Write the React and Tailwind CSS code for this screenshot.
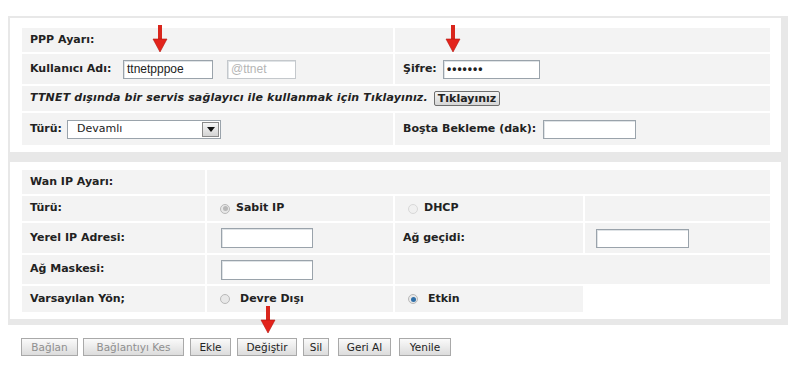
import React from "react";

const FONT = "font-['Liberation_Sans',Arial,sans-serif]";
const LABEL = "font-['DejaVu_Sans',Verdana,sans-serif]";

function Arrow({ className }) {
  return (
    <svg className={`absolute pointer-events-none ${className}`} width="16" height="28" viewBox="0 0 16 28">
      <rect x="6" y="0" width="4" height="15" fill="#d9261c" />
      <path d="M1 14 L15 14 L8 27 Z" fill="#e3231b" stroke="#b3140e" strokeWidth="0.6" />
    </svg>
  );
}

function TextBox({ className = "", children, muted }) {
  return (
    <div
      className={`h-[19px] bg-white border ${muted ? "border-[#c4c8cc]" : "border-[#9aa3ab]"} shadow-[inset_1px_1px_0_#dfe3e6] flex items-center px-[3px] text-[12px] ${FONT} ${
        muted ? "text-[#b5b5b5]" : "text-[#222]"
      } ${className}`}
    >
      {children}
    </div>
  );
}

function Radio({ checked, faint }) {
  return (
    <span
      className={`inline-flex w-[10px] h-[10px] rounded-full border items-center justify-center ${
        faint ? "border-[#d8d8d8] bg-[#f0f0f0]" : "border-[#b9b9b9] bg-[#e8e8e8]"
      }`}
    >
      {checked && (
        <span
          className={`w-[5px] h-[5px] rounded-full ${checked === "blue" ? "bg-[#2f6fa8]" : "bg-[#b8b8b8]"}`}
        />
      )}
    </span>
  );
}

function Btn({ children, w, disabled, className = "" }) {
  return (
    <button
      className={`h-[18px] ${w} border border-[#a9a9a9] bg-gradient-to-b from-[#fafafa] to-[#dcdcdc] ${LABEL} text-[10.5px] leading-none ${
        disabled ? "text-[#8f8f8f]" : "text-[#222]"
      } ${className}`}
    >
      {children}
    </button>
  );
}

const cell = "bg-[#f3f3f3] flex items-center";

export default function App() {
  return (
    <div className={`relative w-[796px] h-[366px] bg-white ${FONT} text-[#222] overflow-hidden`}>
      <div className="h-[16px]" />
      <div className="ml-[8px] w-[780px] bg-[#e8e8e8] pt-[2px] pl-[2px] pr-[7px] pb-[6px] flex flex-col gap-[10px]">
        {/* PPP panel */}
        <div className="bg-white h-[134px] pt-[10px] pl-[12px]">
          <div className={`w-[748px] flex flex-col gap-[2px] text-[11px] font-bold ${LABEL}`}>
            <div className="flex gap-[2px] h-[24px]">
              <div className={`${cell} w-[371px] pl-[8px]`}>PPP Ayarı:</div>
              <div className={`${cell} flex-1`} />
            </div>
            <div className="flex gap-[2px] h-[30px]">
              <div className={`${cell} w-[371px] pl-[8px]`}>
                <span className="w-[93px]">Kullanıcı Adı:</span>
                <TextBox className="w-[90px] h-[18px] font-normal">ttnetpppoe</TextBox>
                <TextBox muted className="w-[69px] h-[18px] ml-[14px] font-normal">@ttnet</TextBox>
              </div>
              <div className={`${cell} flex-1 pl-[8px]`}>
                <span className="w-[40px]">Şifre:</span>
                <TextBox className="w-[97px] font-bold tracking-[1px] text-[11px]">•••••••</TextBox>
              </div>
            </div>
            <div className={`${cell} h-[25px] pl-[8px] italic`}>
              <span className="tracking-[0.17px]">TTNET dışında bir servis sağlayıcı ile kullanmak için Tıklayınız.</span>
              <button className="ml-[6px] h-[15px] px-[3px] border border-[#6f6f6f] rounded-[2px] bg-gradient-to-b from-[#f4f4f4] to-[#d6d6d6] not-italic font-bold text-[11px] leading-none">
                Tıklayınız
              </button>
            </div>
            <div className="flex gap-[2px] h-[32px]">
              <div className={`${cell} w-[371px] pl-[8px]`}>
                <span className="w-[37px]">Türü:</span>
                <div className="w-[154px] h-[19px] bg-white border border-[#9aa3ab] flex items-center">
                  <span className="flex-1 pl-[9px] font-normal text-[11px]">Devamlı</span>
                  <span className="w-[17px] h-[15px] mr-[1px] border border-[#8a8a8a] bg-gradient-to-b from-[#f6f6f6] to-[#d4d4d4] flex items-center justify-center">
                    <svg width="8" height="5" viewBox="0 0 8 5">
                      <path d="M0 0 L8 0 L4 5 Z" fill="#111" />
                    </svg>
                  </span>
                </div>
              </div>
              <div className={`${cell} flex-1 pl-[8px]`}>
                <span className="w-[140px]">Boşta Bekleme (dak):</span>
                <TextBox className="w-[93px]" />
              </div>
            </div>
          </div>
        </div>

        {/* WAN panel */}
        <div className="bg-white h-[157px] pt-[8px] pl-[12px]">
          <div className={`w-[748px] grid grid-cols-[183px_186px_188px_185px] grid-rows-[24px_25px_30px_29px_26px] gap-[2px] text-[11px] font-bold ${LABEL}`}>
            <div className={`${cell} pl-[8px]`}>Wan IP Ayarı:</div>
            <div className={`${cell} col-span-3`} />

            <div className={`${cell} pl-[8px]`}>Türü:</div>
            <div className={`${cell} pl-[13px] gap-[6px]`}>
              <Radio checked="gray" />
              <span>Sabit IP</span>
            </div>
            <div className={`${cell} pl-[13px] gap-[6px]`}>
              <Radio faint />
              <span>DHCP</span>
            </div>
            <div className={cell} />

            <div className={`${cell} pl-[8px]`}>Yerel IP Adresi:</div>
            <div className={`${cell} pl-[14px]`}>
              <TextBox className="w-[92px] h-[20px]" />
            </div>
            <div className={`${cell} pl-[8px]`}>Ağ geçidi:</div>
            <div className={`${cell} pl-[11px]`}>
              <TextBox className="w-[93px]" />
            </div>

            <div className={`${cell} pl-[8px]`}>Ağ Maskesi:</div>
            <div className={`${cell} pl-[14px]`}>
              <TextBox className="w-[92px] h-[20px]" />
            </div>
            <div className={`${cell} col-span-2`} />

            <div className={`${cell} pl-[8px]`}>Varsayılan Yön;</div>
            <div className={`${cell} pl-[13px] gap-[10px]`}>
              <Radio />
              <span>Devre Dışı</span>
            </div>
            <div className={`${cell} pl-[13px] gap-[10px]`}>
              <Radio checked="blue" />
              <span>Etkin</span>
            </div>
            <div className="bg-white" />
          </div>
        </div>
      </div>

      <div className="flex mt-[13px] ml-[21px]">
        <Btn w="w-[57px]" disabled>Bağlan</Btn>
        <Btn w="w-[101px]" disabled className="ml-[5px]">Bağlantıyı Kes</Btn>
        <Btn w="w-[41px]" className="ml-[6px]">Ekle</Btn>
        <Btn w="w-[60px]" className="ml-[6px]">Değiştir</Btn>
        <Btn w="w-[26px]" className="ml-[6px]">Sil</Btn>
        <Btn w="w-[53px]" className="ml-[9px]">Geri Al</Btn>
        <Btn w="w-[52px]" className="ml-[8px]">Yenile</Btn>
      </div>

      <Arrow className="left-[152px] top-[25px]" />
      <Arrow className="left-[445px] top-[25px]" />
      <Arrow className="left-[260px] top-[306px]" />
    </div>
  );
}
